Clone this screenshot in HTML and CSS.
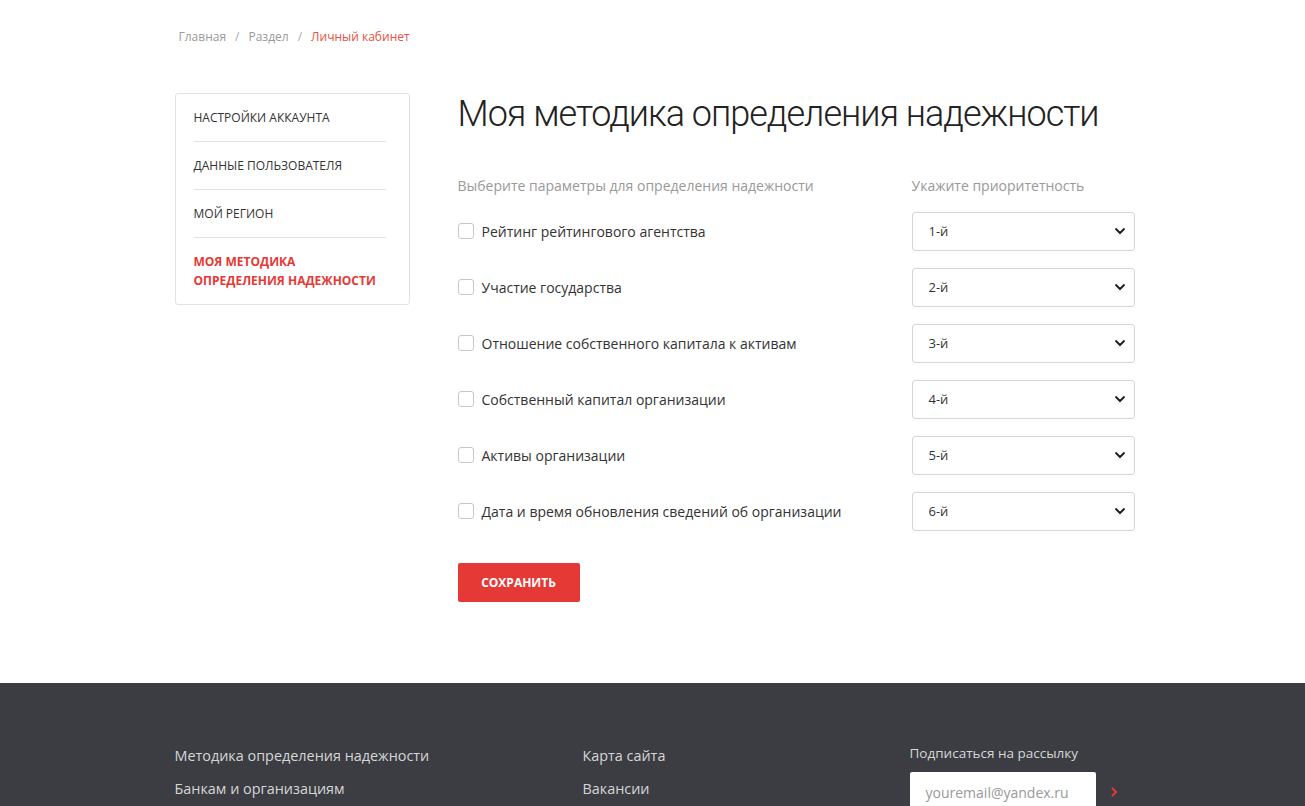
FILE: index.html
```html
<!DOCTYPE html>
<html lang="ru">
<head>
<meta charset="utf-8">
<title>Моя методика определения надежности</title>
<link rel="stylesheet" href="styles.css">
</head>
<body>
<div class="page">
  <div class="container">
    <nav class="breadcrumbs">
      <a href="#">Главная</a><span class="sep">/</span><a href="#">Раздел</a><span class="sep">/</span><span class="current">Личный кабинет</span>
    </nav>
    <div class="layout">
      <aside class="sidebar">
        <a class="side-item" href="#">Настройки аккаунта</a>
        <a class="side-item" href="#">Данные пользователя</a>
        <a class="side-item" href="#">Мой регион</a>
        <a class="side-item active" href="#">Моя методика<br>определения надежности</a>
      </aside>
      <main class="main">
        <h1 class="title">Моя методика определения надежности</h1>
        <div class="form">
          <div class="row head">
            <div class="col-left">Выберите параметры для определения надежности</div>
            <div class="col-right">Укажите приоритетность</div>
          </div>
          <div class="row">
            <label class="col-left check"><span class="box"></span>Рейтинг рейтингового агентства</label>
            <div class="col-right"><div class="select">1-й<svg viewBox="0 0 12 8" class="chev"><path d="M1.5 1.5 6 6l4.5-4.5" fill="none" stroke="#222" stroke-width="2"/></svg></div></div>
          </div>
          <div class="row">
            <label class="col-left check"><span class="box"></span>Участие государства</label>
            <div class="col-right"><div class="select">2-й<svg viewBox="0 0 12 8" class="chev"><path d="M1.5 1.5 6 6l4.5-4.5" fill="none" stroke="#222" stroke-width="2"/></svg></div></div>
          </div>
          <div class="row">
            <label class="col-left check"><span class="box"></span>Отношение собственного капитала к активам</label>
            <div class="col-right"><div class="select">3-й<svg viewBox="0 0 12 8" class="chev"><path d="M1.5 1.5 6 6l4.5-4.5" fill="none" stroke="#222" stroke-width="2"/></svg></div></div>
          </div>
          <div class="row">
            <label class="col-left check"><span class="box"></span>Собственный капитал организации</label>
            <div class="col-right"><div class="select">4-й<svg viewBox="0 0 12 8" class="chev"><path d="M1.5 1.5 6 6l4.5-4.5" fill="none" stroke="#222" stroke-width="2"/></svg></div></div>
          </div>
          <div class="row">
            <label class="col-left check"><span class="box"></span>Активы организации</label>
            <div class="col-right"><div class="select">5-й<svg viewBox="0 0 12 8" class="chev"><path d="M1.5 1.5 6 6l4.5-4.5" fill="none" stroke="#222" stroke-width="2"/></svg></div></div>
          </div>
          <div class="row">
            <label class="col-left check"><span class="box"></span>Дата и время обновления сведений об организации</label>
            <div class="col-right"><div class="select">6-й<svg viewBox="0 0 12 8" class="chev"><path d="M1.5 1.5 6 6l4.5-4.5" fill="none" stroke="#222" stroke-width="2"/></svg></div></div>
          </div>
          <button class="btn" type="button">Сохранить</button>
        </div>
      </main>
    </div>
  </div>
  <footer class="footer">
    <div class="container footer-inner">
      <div class="fcol">
        <a href="#">Методика определения надежности</a>
        <a href="#">Банкам и организациям</a>
      </div>
      <div class="fcol">
        <a href="#">Карта сайта</a>
        <a href="#">Вакансии</a>
      </div>
      <div class="fcol subscribe">
        <div class="sub-label">Подписаться на рассылку</div>
        <div class="sub-row">
          <div class="sub-input">youremail@yandex.ru</div>
          <svg class="sub-arrow" viewBox="0 0 8 12"><path d="M2 2l4 4-4 4" fill="none" stroke="#e53935" stroke-width="2"/></svg>
        </div>
      </div>
    </div>
  </footer>
</div>
</body>
</html>
```

FILE: styles.css
```css
* { box-sizing: border-box; }
html, body { margin: 0; padding: 0; }
body {
  font-family: "Open Sans", "Liberation Sans", sans-serif;
  color: #333;
  background: #fff;
  overflow: hidden;
}
a { text-decoration: none; color: inherit; }
.container {
  width: 960px;
  margin-left: calc(50% - 478px);
}
.breadcrumbs {
  padding: 28px 0 0 4px;
  height: 93px;
  font-size: 12px;
  line-height: 18px;
  color: #999;
}
.breadcrumbs .sep { margin: 0 9px; color: #aaa; }
.breadcrumbs .current { color: #e8513f; }
.layout {
  display: flex;
  gap: 48px;
  height: 590px;
}
.sidebar {
  width: 235px;
  flex: none;
  align-self: flex-start;
  border: 1px solid #e3e3e3;
  border-radius: 3px;
  padding: 0 23px 0 18px;
}
.side-item {
  display: block;
  font-size: 12px;
  line-height: 19px;
  text-transform: uppercase;
  color: #333;
  padding: 14px 0 14px;
  border-bottom: 1px solid #e3e3e3;
}
.side-item.active {
  border-bottom: none;
  color: #e53935;
  font-weight: 700;
}
.main { flex: 1; }
.title {
  margin: 0;
  font-family: "Roboto", "Liberation Sans", sans-serif;
  font-weight: 300;
  font-size: 36px;
  line-height: 42px;
  color: #222;
  letter-spacing: -1px;
}
.form { margin-top: 39px; }
.row {
  display: flex;
  align-items: center;
  height: 56px;
}
.row.head {
  height: 22px;
  margin-bottom: 7px;
  font-size: 14px;
  color: #999;
}
.col-left { width: 454px; flex: none; }
.col-right { width: 223px; flex: none; }
.check {
  display: flex;
  align-items: center;
  font-size: 14px;
  color: #333;
}
.box {
  width: 16px;
  height: 16px;
  border: 1px solid #c8c8c8;
  border-radius: 3px;
  margin-right: 8px;
  flex: none;
}
.select {
  height: 39px;
  border: 1px solid #d6d6d6;
  border-radius: 3px;
  display: flex;
  align-items: center;
  justify-content: space-between;
  padding: 0 8px 0 16px;
  font-size: 13px;
  color: #333;
}
.chev { width: 12px; height: 8px; }
.btn {
  margin-top: 24px;
  width: 122px;
  height: 39px;
  border: none;
  border-radius: 2px;
  background: #e53935;
  color: #fff;
  font-family: "Open Sans", sans-serif;
  font-weight: 700;
  font-size: 12px;
  text-transform: uppercase;
  cursor: pointer;
}
.footer {
  background: #3b3d42;
  height: 123px;
}
.footer-inner {
  display: flex;
  padding-top: 62px;
}
.fcol {
  display: flex;
  flex-direction: column;
  gap: 12px;
  font-size: 14.4px;
  line-height: 21px;
  color: #d6d6d6;
}
.fcol:first-child { width: 408px; }
.fcol:nth-child(2) { width: 327px; }
.subscribe { margin-top: -2px; gap: 0; }
.sub-label { font-size: 13.5px; color: #d6d6d6; line-height: 20px; }
.sub-row {
  display: flex;
  align-items: center;
  margin-top: 9px;
}
.sub-input {
  width: 186px;
  height: 42px;
  background: #fff;
  border-radius: 2px;
  font-size: 14px;
  color: #999;
  padding: 10px 0 0 16px;
}
.sub-arrow { width: 8px; height: 12px; margin-left: 14px; margin-top: -2px; }
```
